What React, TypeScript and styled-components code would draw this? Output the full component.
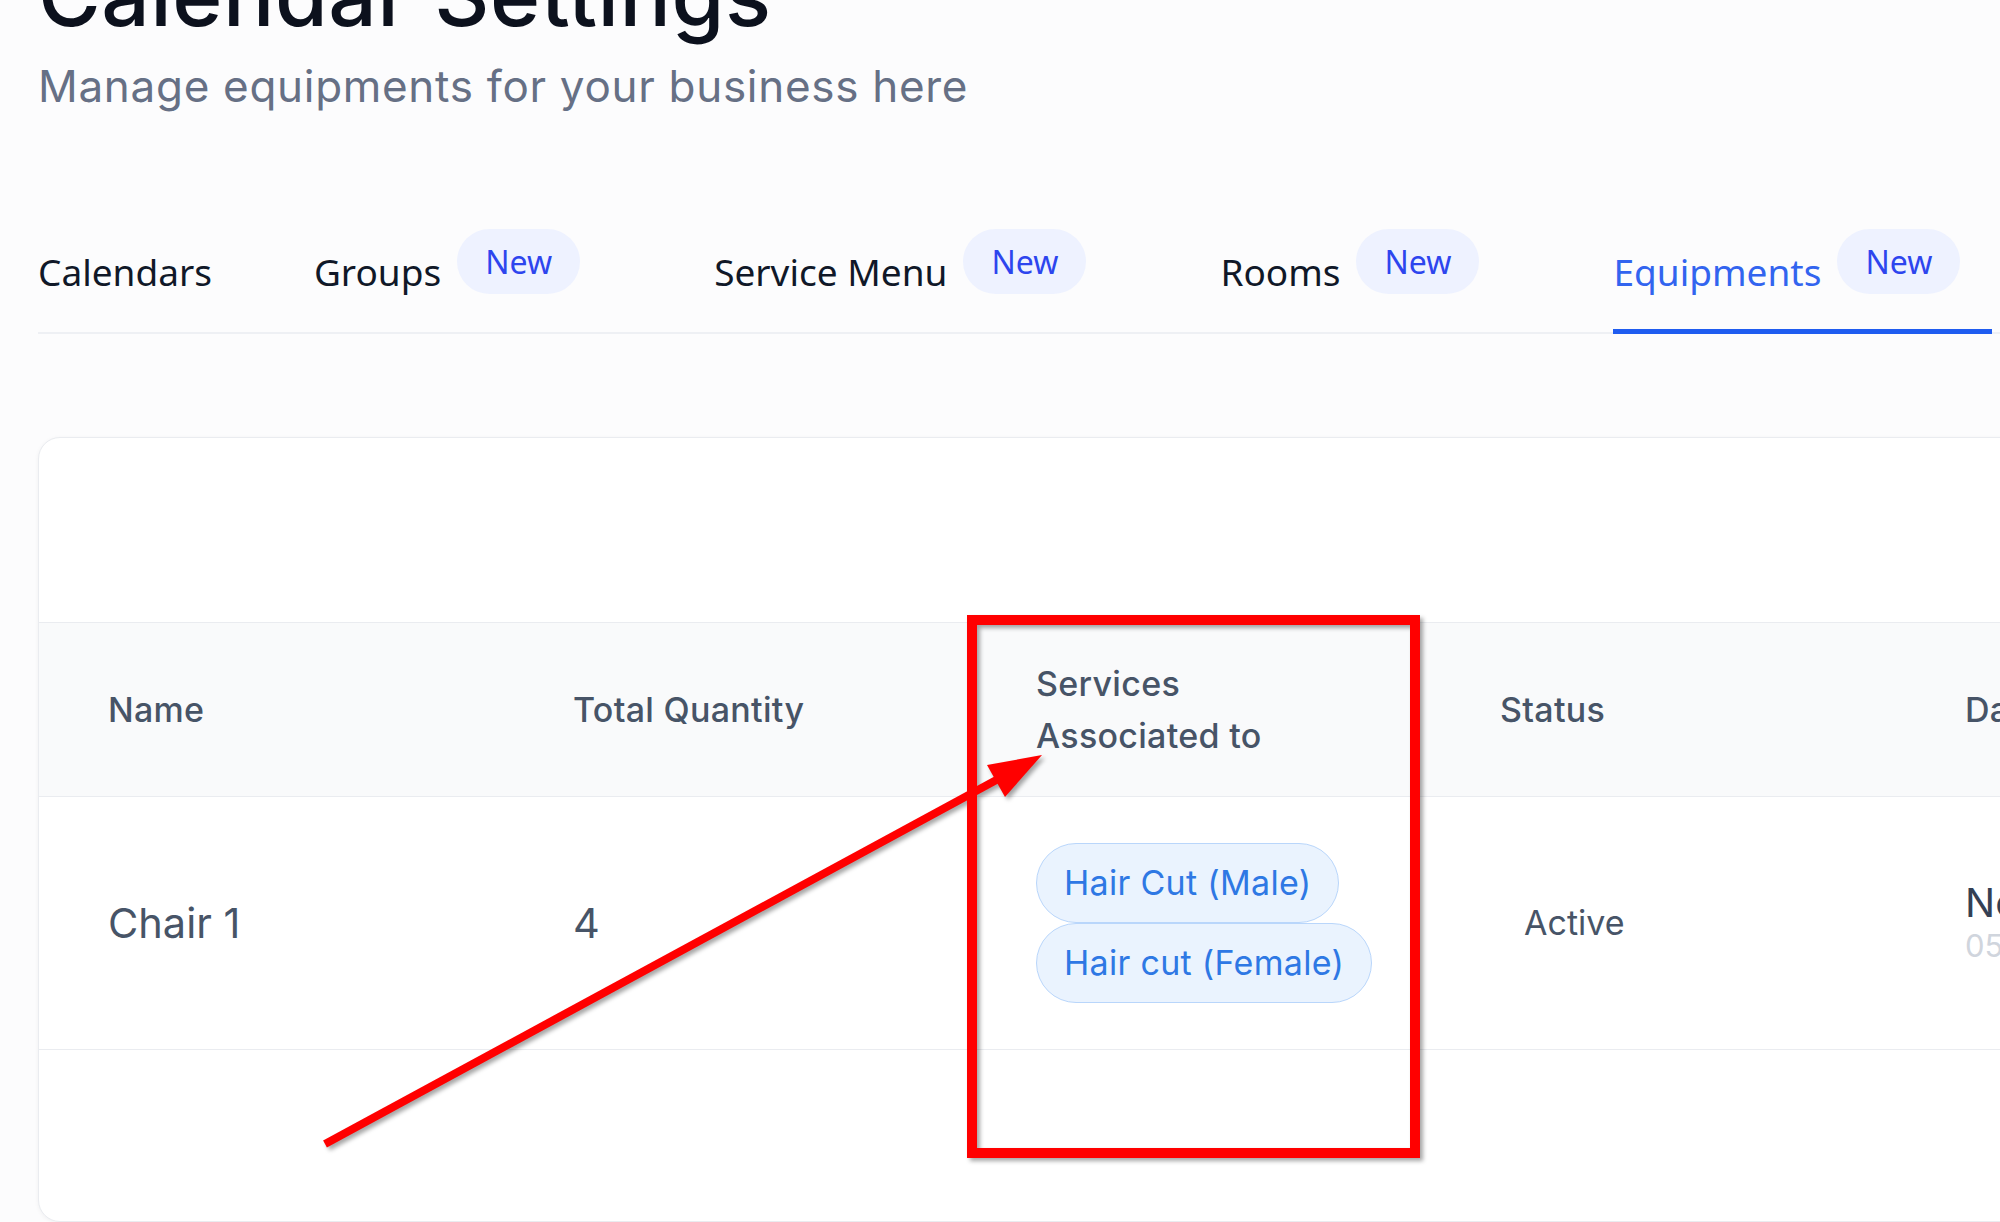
import React from "react";
import styled, { createGlobalStyle } from "styled-components";

const GlobalStyle = createGlobalStyle`
  html, body {
    margin: 0;
    padding: 0;
    background: #fcfcfd;
    overflow: hidden;
  }
  * { box-sizing: border-box; }
`;

const Page = styled.div`
  position: relative;
  width: 2000px;
  height: 1222px;
  overflow: hidden;
  padding-left: 38px;
  background: #fcfcfd;
  font-family: Inter, "Liberation Sans", sans-serif;
`;

const Header = styled.header`
  display: flex;
  flex-direction: column;
`;

const Title = styled.h1`
  margin: -47px 0 0 0;
  font-size: 85.5px;
  line-height: 85px;
  font-weight: 500;
  color: #0c111d;
  letter-spacing: 0.5px;
  white-space: nowrap;
`;

const Subtitle = styled.p`
  margin: 26px 0 0 0;
  font-size: 44px;
  line-height: 44px;
  font-weight: 400;
  color: #667085;
  letter-spacing: 0.7px;
`;

const TabBar = styled.nav`
  display: flex;
  align-items: flex-start;
  gap: 102px;
  margin-top: 121px;
  border-bottom: 2px solid #eef0f4;
  font-family: "Noto Sans", "Liberation Sans", sans-serif;
`;

const Tab = styled.div<{ $active?: boolean; $badge?: boolean }>`
  display: flex;
  align-items: flex-start;
  height: 105px;
  margin-bottom: -2px;
  padding-right: ${(p) => (p.$badge ? "32px" : "0")};
  border-bottom: 5px solid ${(p) => (p.$active ? "#1f5cf0" : "transparent")};
  color: ${(p) => (p.$active ? "#3264ef" : "#101828")};
`;

const TabLabel = styled.span`
  margin-top: 19px;
  font-size: 37px;
  line-height: 48px;
  white-space: nowrap;
`;

const Badge = styled.span`
  display: inline-flex;
  align-items: center;
  justify-content: center;
  width: 123px;
  height: 65px;
  margin-left: 16px;
  border-radius: 999px;
  background: #eef2ff;
  color: #2d45ee;
  font-size: 32px;
`;

const Card = styled.section`
  width: 2400px;
  height: 785px;
  margin-top: 103px;
  background: #ffffff;
  border: 1px solid #eaecf0;
  border-radius: 22px;
  box-shadow: 0 1px 4px rgba(16, 24, 40, 0.05);
  overflow: hidden;
`;

const Toolbar = styled.div`
  height: 184px;
`;

const Grid = styled.div`
  display: grid;
  grid-template-columns: 465px 463px 464px 465px 465px 1fr;
`;

const HeadRow = styled(Grid)`
  height: 175px;
  background: #f9fafb;
  border-top: 1px solid #eaecf0;
  border-bottom: 1px solid #eaecf0;
`;

const BodyRow = styled(Grid)`
  height: 253px;
  border-bottom: 1px solid #eaecf0;
`;

const Th = styled.div`
  display: flex;
  align-items: center;
  padding-left: 69px;
  font-size: 34px;
  line-height: 52px;
  font-weight: 500;
  letter-spacing: 0.3px;
  color: #475467;
`;

const ThText = styled.span<{ $wrap?: boolean }>`
  max-width: ${(p) => (p.$wrap ? "300px" : "none")};
  white-space: ${(p) => (p.$wrap ? "normal" : "nowrap")};
`;

const Td = styled.div`
  display: flex;
  flex-direction: column;
  justify-content: center;
  align-items: flex-start;
  padding-left: 69px;
  color: #475467;
  font-size: 41.5px;
  line-height: 48px;
  white-space: nowrap;
`;

const Pill = styled.span`
  display: inline-flex;
  align-items: center;
  height: 80px;
  padding: 0 27px;
  border: 1px solid #b9d6fb;
  border-radius: 999px;
  background: #eaf3fe;
  color: #2e78e4;
  font-size: 34px;
  letter-spacing: 0.3px;
  white-space: nowrap;
`;

const Status = styled.span`
  padding-left: 24px;
  font-size: 34px;
  color: #475467;
`;

const DateMain = styled.span`
  font-size: 40px;
  line-height: 46px;
  color: #344054;
`;

const DateSub = styled.span`
  font-size: 31px;
  line-height: 40px;
  color: #d0d5dd;
`;

const Annotation = styled.svg`
  position: absolute;
  left: 0;
  top: 0;
  pointer-events: none;
  filter: drop-shadow(3px 3px 2px rgba(0, 0, 0, 0.35));
`;

const tabs = [
  { label: "Calendars", badge: false },
  { label: "Groups", badge: true },
  { label: "Service Menu", badge: true },
  { label: "Rooms", badge: true },
  { label: "Equipments", badge: true, active: true },
];

export default function App() {
  return (
    <>
      <GlobalStyle />
      <Page>
        <Header>
          <Title>Calendar Settings</Title>
          <Subtitle>Manage equipments for your business here</Subtitle>
        </Header>

        <TabBar>
          {tabs.map((t) => (
            <Tab key={t.label} $active={t.active} $badge={t.badge}>
              <TabLabel>{t.label}</TabLabel>
              {t.badge && <Badge>New</Badge>}
            </Tab>
          ))}
        </TabBar>

        <Card>
          <Toolbar />
          <HeadRow>
            <Th><ThText>Name</ThText></Th>
            <Th><ThText>Total Quantity</ThText></Th>
            <Th><ThText $wrap>Services Associated to</ThText></Th>
            <Th><ThText>Status</ThText></Th>
            <Th><ThText>Date Created</ThText></Th>
            <Th />
          </HeadRow>
          <BodyRow>
            <Td>Chair 1</Td>
            <Td>4</Td>
            <Td>
              <Pill>Hair Cut (Male)</Pill>
              <Pill>Hair cut (Female)</Pill>
            </Td>
            <Td><Status>Active</Status></Td>
            <Td>
              <DateMain>Nov 15, 2023</DateMain>
              <DateSub>05:42 PM</DateSub>
            </Td>
            <Td />
          </BodyRow>
        </Card>

        <Annotation width="2000" height="1222" viewBox="0 0 2000 1222">
          <rect x="972" y="620" width="443" height="533" fill="none" stroke="#ff0000" strokeWidth="10" />
          <line x1="325" y1="1144" x2="1000" y2="778" stroke="#ff0000" strokeWidth="8" />
          <polygon points="1042,755 987,765 1005,797" fill="#ff0000" />
        </Annotation>
      </Page>
    </>
  );
}
